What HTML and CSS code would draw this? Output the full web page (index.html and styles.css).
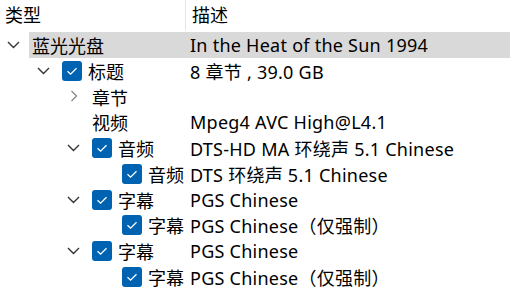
FILE: index.html
```html
<!DOCTYPE html>
<html>
<head>
    <title>蓝光光盘</title>
    <link rel="stylesheet" href="styles.css">
</head>
<body>
    <div class="tree">
        <div class="header">
            <div class="col-type">类型</div>
            <div class="col-desc">描述</div>
        </div>

        <div class="row l1">
            <div class="exp"><svg class="down" width="13" height="8" viewBox="0 0 13 8"><polyline points="1,1 6.5,6.5 12,1"/></svg></div>
            <div class="cells selected">
                <div class="name">蓝光光盘</div>
                <div class="desc">In the Heat of the Sun 1994</div>
            </div>
        </div>

        <div class="row l2">
            <div class="exp"><svg class="down" width="13" height="8" viewBox="0 0 13 8"><polyline points="1,1 6.5,6.5 12,1"/></svg></div>
            <div class="cells">
                <div class="name"><span class="check"><svg width="20" height="20" viewBox="0 0 20 20"><polyline points="5.5,10.2 8.6,13.2 14.5,7.2"/></svg></span>标题</div>
                <div class="desc">8 章节 , 39.0 GB</div>
            </div>
        </div>

        <div class="row l3">
            <div class="exp"><svg class="right" width="8" height="12" viewBox="0 0 8 12"><polyline points="1.5,1 6.5,6 1.5,11"/></svg></div>
            <div class="cells">
                <div class="name">章节</div>
                <div class="desc"></div>
            </div>
        </div>

        <div class="row l3">
            <div class="exp"></div>
            <div class="cells">
                <div class="name">视频</div>
                <div class="desc">Mpeg4 AVC High@L4.1</div>
            </div>
        </div>

        <div class="row l3">
            <div class="exp"><svg class="down" width="13" height="8" viewBox="0 0 13 8"><polyline points="1,1 6.5,6.5 12,1"/></svg></div>
            <div class="cells">
                <div class="name"><span class="check"><svg width="20" height="20" viewBox="0 0 20 20"><polyline points="5.5,10.2 8.6,13.2 14.5,7.2"/></svg></span>音频</div>
                <div class="desc">DTS-HD MA 环绕声 5.1 Chinese</div>
            </div>
        </div>

        <div class="row l4">
            <div class="exp"></div>
            <div class="cells">
                <div class="name"><span class="check"><svg width="20" height="20" viewBox="0 0 20 20"><polyline points="5.5,10.2 8.6,13.2 14.5,7.2"/></svg></span>音频</div>
                <div class="desc">DTS 环绕声 5.1 Chinese</div>
            </div>
        </div>

        <div class="row l3">
            <div class="exp"><svg class="down" width="13" height="8" viewBox="0 0 13 8"><polyline points="1,1 6.5,6.5 12,1"/></svg></div>
            <div class="cells">
                <div class="name"><span class="check"><svg width="20" height="20" viewBox="0 0 20 20"><polyline points="5.5,10.2 8.6,13.2 14.5,7.2"/></svg></span>字幕</div>
                <div class="desc">PGS Chinese</div>
            </div>
        </div>

        <div class="row l4">
            <div class="exp"></div>
            <div class="cells">
                <div class="name"><span class="check"><svg width="20" height="20" viewBox="0 0 20 20"><polyline points="5.5,10.2 8.6,13.2 14.5,7.2"/></svg></span>字幕</div>
                <div class="desc">PGS Chinese（仅强制）</div>
            </div>
        </div>

        <div class="row l3">
            <div class="exp"><svg class="down" width="13" height="8" viewBox="0 0 13 8"><polyline points="1,1 6.5,6.5 12,1"/></svg></div>
            <div class="cells">
                <div class="name"><span class="check"><svg width="20" height="20" viewBox="0 0 20 20"><polyline points="5.5,10.2 8.6,13.2 14.5,7.2"/></svg></span>字幕</div>
                <div class="desc">PGS Chinese</div>
            </div>
        </div>

        <div class="row l4">
            <div class="exp"></div>
            <div class="cells">
                <div class="name"><span class="check"><svg width="20" height="20" viewBox="0 0 20 20"><polyline points="5.5,10.2 8.6,13.2 14.5,7.2"/></svg></span>字幕</div>
                <div class="desc">PGS Chinese（仅强制）</div>
            </div>
        </div>
    </div>
</body>
</html>
```

FILE: styles.css
```css
body {
    margin: 0;
    background: #fff;
    font-family: "Noto Sans", "Noto Sans CJK SC", sans-serif;
    font-size: 18px;
    color: #000;
    overflow: hidden;
}
.tree { width: 510px; }

.header {
    display: flex;
    height: 30px;
    margin-bottom: 2px;
}
.col-type {
    width: 186px;
    padding-left: 5px;
    box-sizing: border-box;
    border-right: 1px solid #e5e5e5;
    line-height: 30px;
}
.col-desc {
    padding-left: 6px;
    line-height: 30px;
}

.row {
    display: flex;
    height: 25.8px;
}
.exp {
    width: 29px;
    flex: none;
    display: flex;
    align-items: center;
    justify-content: center;
    padding-right: 2px;
    box-sizing: border-box;
}
.exp svg { fill: none; stroke-width: 1.4; }
.exp .down { stroke: #333; }
.exp .right { stroke: #8a8a8a; }

.cells {
    flex: 1;
    display: flex;
    align-items: center;
}
.cells.selected { background: #d9d9d9; }

.name {
    display: flex;
    align-items: center;
    padding-left: 3px;
    box-sizing: border-box;
    white-space: nowrap;
}
.l1 .name { width: 157px; }
.l2 { padding-left: 30px; }
.l2 .name { width: 127px; }
.l3 { padding-left: 60px; }
.l3 .name { width: 97px; }
.l4 { padding-left: 90px; }
.l4 .name { width: 67px; }

.desc {
    padding-left: 4px;
    white-space: nowrap;
    letter-spacing: 0.25px;
}

.check {
    width: 20px;
    height: 20px;
    flex: none;
    margin-right: 6px;
    border-radius: 3px;
    background: #0063b1;
    display: flex;
}
.check svg { fill: none; stroke: #fff; stroke-width: 1.3; }
```
